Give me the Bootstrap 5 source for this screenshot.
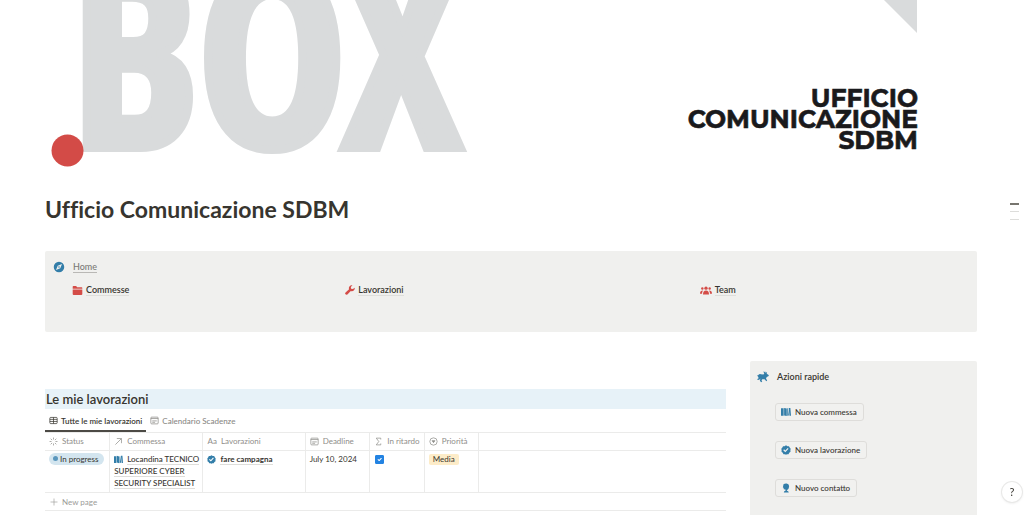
<!DOCTYPE html>
<html lang="it">
<head>
<meta charset="utf-8">
<meta name="viewport" content="width=device-width, initial-scale=1">
<title>Ufficio Comunicazione SDBM</title>
<link href="https://cdn.jsdelivr.net/npm/bootstrap@5.3.0/dist/css/bootstrap.min.css" rel="stylesheet">
<style>
  body { font-family: Lato, "Open Sans", sans-serif; font-size: 8px; line-height: 12px; color: #37352f; background: #fff; font-variant-ligatures: none; }
  .cover-art { display: block; width: 100%; height: auto; }
  .page-body { padding: 0 47px 0 45px; }
  .page-title { font-size: 23px; line-height: 28px; font-weight: 700; margin: 15px 0 28px; }
  .callout { background: #f0f0ee; border-radius: 2px; }
  .nav-callout { min-height: 81px; padding: 10px 8px; }
  .nav-links { display: grid; grid-template-columns: 273fr 354fr 266fr; padding: 11px 3px 0 19px; font-size: 9px; }
  .nav-links > div { display: flex; align-items: center; gap: 3px; }
  .page-link-text { color: #37352f; font-weight: 700; text-decoration: none; border-bottom: 1px solid #dededb; }
  .nav-links .page-link-text { font-weight: 600; line-height: 11px; }
  .page-link-text.soft { color: #7b7a76; font-weight: 500; font-size: 9px; line-height: 11px; border-color: #b9b8b5; }
  .main-columns { display: grid; grid-template-columns: 3fr 1fr; gap: 24px; margin-top: 29px; }
  .section-title { background: #e7f2f8; font-size: 13px; line-height: 20px; font-weight: 600; margin: 28px 0 0; padding-left: 1px; }
  .view-tabs { height: 23px; }
  .view-tabs button { border: 0; background: none; padding: 0 4px; gap: 3px; color: #8a8985; font-weight: 500; }
  .view-tabs button.active { color: #37352f; font-weight: 600; border-bottom: 2px solid #4c4a45; padding-top: 2px; }
  .data-grid { table-layout: fixed; width: 100%; margin: 0; border-top: 1px solid #ebebea; }
  .data-grid th, .data-grid td { border: 0 solid #ebebea; border-width: 0 1px 1px 0; padding: 2px 0 2px 4px; vertical-align: top; overflow: hidden; }
  .data-grid th { font-weight: 400; color: #8f8e8a; white-space: nowrap; height: 18px; }
  .data-grid tbody td { height: 42px; }
  .data-grid th:last-child, .data-grid td:last-child { border-right: 0; }
  .status-pill { display: inline-block; background: #d3e5ef; border-radius: 6px; padding: 0 5px 0 4px; line-height: 12px; white-space: nowrap; }
  .status-pill i { display: inline-block; width: 5px; height: 5px; border-radius: 50%; background: #5b97bd; vertical-align: 1px; margin-right: 2px; }
  .prio-tag { display: inline-block; background: #fdecc8; border-radius: 2px; padding: 0 4px; line-height: 11px; }
  .data-grid .form-check-input { display: block; width: 9px; height: 9px; margin: 2px 0 0 1px; border-radius: 1px; float: none; }
  .data-grid .form-check-input:checked { background-color: #2383e2; border-color: #2383e2; opacity: 1; }
  .new-row { height: 18px; width: 100%; border: 0; border-bottom: 1px solid #ebebea; background: none; color: #9c9b98; text-align: left; padding: 0 5px; }
  .quick { padding: 10px 7px 40px; }
  .quick-head { font-size: 9px; font-weight: 600; }
  .quick-list { padding: 20px 0 0 18px; }
  .quick-btn { border: 1px solid #deddda; border-radius: 3px; background: #f1f1ef; color: #37352f; font-weight: 500; padding: 2px 6px 2px 5px; line-height: 12px; }
  .quick-list > * + * { margin-top: 20px; }
  svg.ico { flex: none; vertical-align: -2px; fill: currentColor; }
  .line-ico { fill: none !important; stroke: currentColor; stroke-width: 1.3; }
  .blue { color: #337ea9; } .red { color: #d44c47; }
  .outline-nav { position: fixed; right: 5px; top: 203px; }
  .outline-nav a { display: block; width: 9px; height: 1px; background: #dddddb; margin-bottom: 7px; }
  .outline-nav a.active { background: #77756f; height: 2px; margin-bottom: 6px; }
  .help-btn { position: fixed; right: 2px; bottom: 13px; width: 20px; height: 20px; border-radius: 50%; border: 0; background: #fff; color: #37352f; font-size: 11px; padding: 0; box-shadow: 0 0 0 1px #e9e9e8, 0 1px 3px #0002; }
</style>
</head>
<body>
<svg width="0" height="0" class="d-block" aria-hidden="true">
  <symbol id="map" viewBox="0 0 16 16"><path d="M0 2h4.200v12H0zM5 1.500l4.200 1v12L5 13.500zM10 2.500l1-.8L12.600 13l-1.200 1H10zM12.300 1.500H15l1 12.500h-2.400z"/></symbol>
  <symbol id="check" viewBox="0 0 16 16"><path fill-rule="evenodd" d="M8 .5l2.200 1.300 2.500.1 1.100 2.200L15.500 6 15 8.500l.2 2.400-2 1.500-1.200 2.200-2.500.2L8 15.500l-1.600-.7-2.400-.2-1.200-2.200-2-1.500L1 8.500.5 6l1.700-1.900 1.100-2.200 2.500-.1zM6.900 11.500l5.200-5.600-1.400-1.300-3.800 4.200-2-1.900-1.300 1.400z"/></symbol>
  <symbol id="cal" viewBox="0 0 16 16"><rect x="1.500" y="2" width="13" height="12" rx="1.500"/><path d="M1.500 4.500h13M4 8.700h8M4 11.200h5"/></symbol>
</svg>

<header>
  <svg class="cover-art" viewBox="0 0 1024 180" role="img" aria-label="BOX Ufficio Comunicazione SDBM">
    <text x="71" y="148" font-family="Open Sans Condensed, Roboto Condensed, sans-serif" font-weight="700" font-size="250" fill="#d9dbdc" stroke="#d9dbdc" stroke-width="8">BOX</text>
    <path d="M884 0h33v33z" fill="#d9dbdc"/>
    <g font-family="Montserrat, sans-serif" font-weight="700" font-size="25" fill="#1a1a1c" stroke="#1a1a1c" stroke-width=".6" text-anchor="end">
      <text x="918" y="107">UFFICIO</text>
      <text x="918" y="128">COMUNICAZIONE</text>
      <text x="918" y="149">SDBM</text>
    </g>
    <circle cx="67.500" cy="150.500" r="16" fill="#d34b47"/>
  </svg>
</header>

<main class="page-body">
  <h1 class="page-title">Ufficio Comunicazione SDBM</h1>

  <section class="callout nav-callout">
    <div class="d-flex align-items-center">
      <svg class="ico blue me-1" width="12" height="12" viewBox="0 0 16 16"><path fill-rule="evenodd" d="M8 1a7 7 0 1 0 0 14A7 7 0 0 0 8 1zm4 3L9.700 9.600 4 12l2.300-5.600zM8 7a1 1 0 1 0 0 2 1 1 0 0 0 0-2z"/></svg>
      <a href="#" class="page-link-text soft ms-1">Home</a>
    </div>
    <nav class="nav-links">
      <div><svg class="ico red" width="11" height="11" viewBox="0 0 16 16"><path d="M1 2.500Q1 1.500 2 1.500h4l1.500 1.800H14q1 0 1 1v1.200H1zM1 6.500h14V13q0 1.500-1.500 1.500h-11Q1 14.500 1 13z"/></svg><a href="#" class="page-link-text">Commesse</a></div>
      <div><svg class="ico red" width="10" height="10" viewBox="0 0 16 16"><path d="M15.500 4.200a4.600 4.600 0 0 1-6.200 5.300l-5.500 5.500a2 2 0 0 1-2.900-2.900l5.600-5.500A4.600 4.600 0 0 1 12 .5L9.300 3.200l.5 2.800 2.900.5z"/></svg><a href="#" class="page-link-text">Lavorazioni</a></div>
      <div><svg class="ico red" width="12" height="11" viewBox="0 0 18 16"><circle cx="9" cy="4.500" r="2.500"/><circle cx="3.500" cy="5" r="1.800"/><circle cx="14.500" cy="5" r="1.800"/><path d="M4.500 14q0-6 4.500-6t4.500 6zM0 13q0-5 4.500-5Q3 10 3 13zM18 13q0-5-4.500-5Q15 10 15 13z"/></svg><a href="#" class="page-link-text">Team</a></div>
    </nav>
  </section>

  <div class="main-columns">
    <section>
      <h2 class="section-title">Le mie lavorazioni</h2>
      <div class="view-tabs d-flex" role="tablist">
        <button type="button" role="tab" aria-selected="true" class="active d-flex align-items-center"><svg class="ico line-ico" width="9" height="9" viewBox="0 0 16 16"><rect x="1.500" y="2.500" width="13" height="11" rx="1.500"/><path d="M1.500 6h13M1.500 9.700h13M8 2.500v11"/></svg>Tutte le mie lavorazioni</button>
        <button type="button" role="tab" aria-selected="false" class="d-flex align-items-center"><svg class="ico line-ico" width="9" height="9"><use href="#cal"/></svg>Calendario Scadenze</button>
      </div>
      <table class="data-grid">
        <colgroup><col style="width:9.500%"><col style="width:13.700%"><col style="width:15%"><col style="width:9.500%"><col style="width:8%"><col style="width:8%"><col></colgroup>
        <thead>
          <tr>
            <th scope="col"><svg class="ico line-ico me-1" width="9" height="9" viewBox="0 0 16 16"><path d="M8 1v3.500M8 11.500V15M1 8h3.500M11.500 8H15M3 3l2.500 2.500M10.500 10.500L13 13M3 13l2.500-2.500M10.500 5.500L13 3"/></svg>Status</th>
            <th scope="col"><svg class="ico line-ico me-1" width="9" height="9" viewBox="0 0 16 16"><path d="M2.500 13.500L13 3M5 2.700h8.300V11"/></svg>Commessa</th>
            <th scope="col"><span class="me-1" aria-hidden="true">Aa</span>Lavorazioni</th>
            <th scope="col"><svg class="ico line-ico me-1" width="9" height="9"><use href="#cal"/></svg>Deadline</th>
            <th scope="col"><svg class="ico line-ico me-1" width="9" height="9" viewBox="0 0 16 16"><path d="M12 4.500V2H4l4.500 6L4 14h8v-2.500"/></svg>In ritardo</th>
            <th scope="col"><svg class="ico line-ico me-1" width="9" height="9" viewBox="0 0 16 16"><circle cx="8" cy="8" r="6.500"/><path fill="currentColor" d="M5.500 6.500h5L8 10z"/></svg>Priorità</th>
            <th></th>
          </tr>
        </thead>
        <tbody>
          <tr>
            <td><span class="status-pill"><i></i>In progress</span></td>
            <td><svg class="ico blue me-1" width="9" height="9"><use href="#map"/></svg><a href="#" class="page-link-text fw-medium">Locandina TECNICO SUPERIORE CYBER SECURITY SPECIALIST</a></td>
            <td><svg class="ico blue me-1" width="9" height="9"><use href="#check"/></svg><a href="#" class="page-link-text">fare campagna</a></td>
            <td>July 10, 2024</td>
            <td><input class="form-check-input" type="checkbox" checked aria-label="In ritardo"></td>
            <td><span class="prio-tag">Media</span></td>
            <td></td>
          </tr>
        </tbody>
      </table>
      <button type="button" class="new-row d-flex align-items-center gap-1"><svg class="ico line-ico" width="8" height="8" viewBox="0 0 16 16"><path d="M8 1v14M1 8h14"/></svg>New page</button>
    </section>

    <aside class="callout quick">
      <div class="d-flex align-items-center">
        <svg class="ico blue" width="12" height="12" viewBox="0 0 16 16"><path d="M0 6l1.500-.5Q3 3.800 5 4.200l3.500.3 1.200-1L8.500.8 10 1l1.300 1.500.2-2L13 2v1.500l2.500 1.700.2 1.600L13 8l-1 2 1.500 2.500-1 1L10 11H7l-1 1.500L7 14l-1.500 1-1.700-2L4.500 10 3 11.500.8 12 .5 10.500l1.700-1L1.500 7.500z"/></svg>
        <span class="quick-head ms-2">Azioni rapide</span>
      </div>
      <div class="quick-list d-flex flex-column align-items-start">
        <button type="button" class="quick-btn d-flex align-items-center gap-1"><svg class="ico blue" width="10" height="10"><use href="#map"/></svg>Nuova commessa</button>
        <button type="button" class="quick-btn d-flex align-items-center gap-1"><svg class="ico blue" width="10" height="10"><use href="#check"/></svg>Nuova lavorazione</button>
        <button type="button" class="quick-btn d-flex align-items-center gap-1"><svg class="ico blue" width="10" height="10" viewBox="0 0 16 16"><path d="M4 2Q6 .5 9 .8q3.500.6 4 4l-.6 3.700Q11 11 9.500 11v1.300q2.500 0 3 2.700h-8q0-2.500 2.700-2.700V10.500L4.500 10 4 7.500 3 7z"/></svg>Nuovo contatto</button>
      </div>
    </aside>
  </div>
</main>

<nav class="outline-nav" aria-label="Indice"><a href="#" class="active" aria-label="Titolo"></a><a href="#" aria-label="Home"></a><a href="#" aria-label="Lavorazioni"></a></nav>
<button type="button" class="help-btn">?</button>
<script src="https://cdn.jsdelivr.net/npm/bootstrap@5.3.0/dist/js/bootstrap.bundle.min.js"></script>
</body>
</html>
